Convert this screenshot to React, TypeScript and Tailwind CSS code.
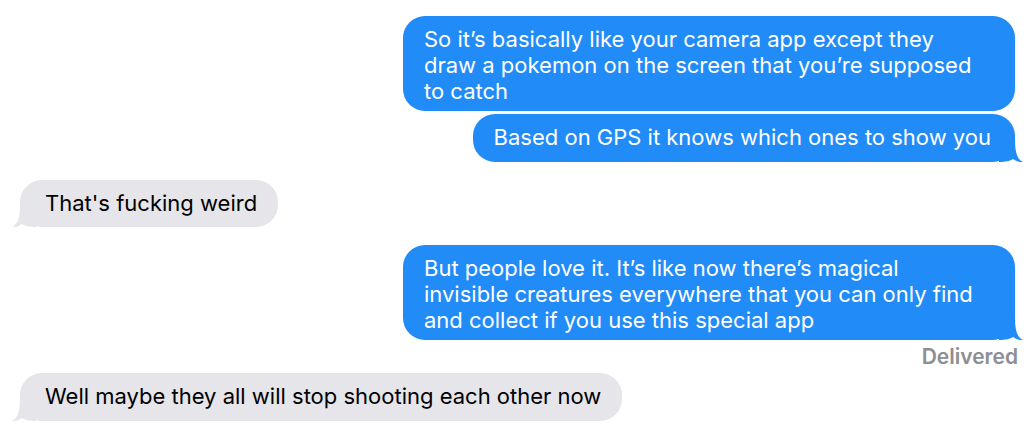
import React from "react";

const BLUE = "#218bf8";
const GRAY = "#e5e5ea";

function SentTail() {
  return (
    <svg className="absolute right-[-8px] bottom-0" width="24" height="22" viewBox="-16 -22 24 22" aria-hidden>
      <path d="M-16 -22 L0 -22 C0 -10 2 -3 8 0 C4 0.4 1 -0.8 -2 -3 C-5 -1 -9 0 -16 0 Z" fill={BLUE} />
    </svg>
  );
}

function RecvTail() {
  return (
    <svg className="absolute left-[-8px] bottom-0" width="24" height="22" viewBox="-8 -22 24 22" aria-hidden>
      <path d="M16 -22 L0 -22 C0 -10 -2 -3 -8 0 C-4 0.4 -1 -0.8 2 -3 C5 -1 9 0 16 0 Z" fill={GRAY} />
    </svg>
  );
}

function Sent({ children, tail, wide }: { children: React.ReactNode; tail?: boolean; wide?: boolean }) {
  return (
    <div className="flex justify-end">
      <div
        className={`relative rounded-[22px] bg-[#218bf8] text-white pl-[21px] pr-[24px] text-[22px] ${
          wide ? "w-[612px] pt-[10px] pb-[7px] leading-[26px]" : "py-[11px] leading-[25.5px]"
        }`}
      >
        <span className="relative z-10 whitespace-nowrap">{children}</span>
        {tail && <SentTail />}
      </div>
    </div>
  );
}

function Recv({ children }: { children: React.ReactNode }) {
  return (
    <div className="flex justify-start">
      <div className="relative rounded-[22px] bg-[#e5e5ea] text-black pl-[25px] pr-[21px] py-[11px] text-[22px] leading-[25.5px]">
        <span className="relative z-10 whitespace-nowrap">{children}</span>
        <RecvTail />
      </div>
    </div>
  );
}

export default function App() {
  return (
    <div
      className="w-[1034px] h-[434px] bg-white overflow-hidden pt-[16px] pl-[20px] pr-[19px]"
      style={{ fontFamily: "Inter, 'Noto Sans', sans-serif" }}
    >
      <div className="flex flex-col">
        <Sent wide>
          So it’s basically like your camera app except they
          <br />
          draw a pokemon on the screen that you’re supposed
          <br />
          to catch
        </Sent>
        <div className="h-[3px]" />
        <Sent tail>Based on GPS it knows which ones to show you</Sent>
        <div className="h-[18px]" />
        <Recv>That's fucking weird</Recv>
        <div className="h-[18px]" />
        <Sent wide tail>
          But people love it. It’s like now there’s magical
          <br />
          invisible creatures everywhere that you can only find
          <br />
          and collect if you use this special app
        </Sent>
        <div className="flex justify-end mt-[5px] mr-[-3px]">
          <span className="text-[21px] leading-[24px] font-semibold text-[#8e8e93]">Delivered</span>
        </div>
        <div className="h-[4px]" />
        <Recv>Well maybe they all will stop shooting each other now</Recv>
      </div>
    </div>
  );
}
